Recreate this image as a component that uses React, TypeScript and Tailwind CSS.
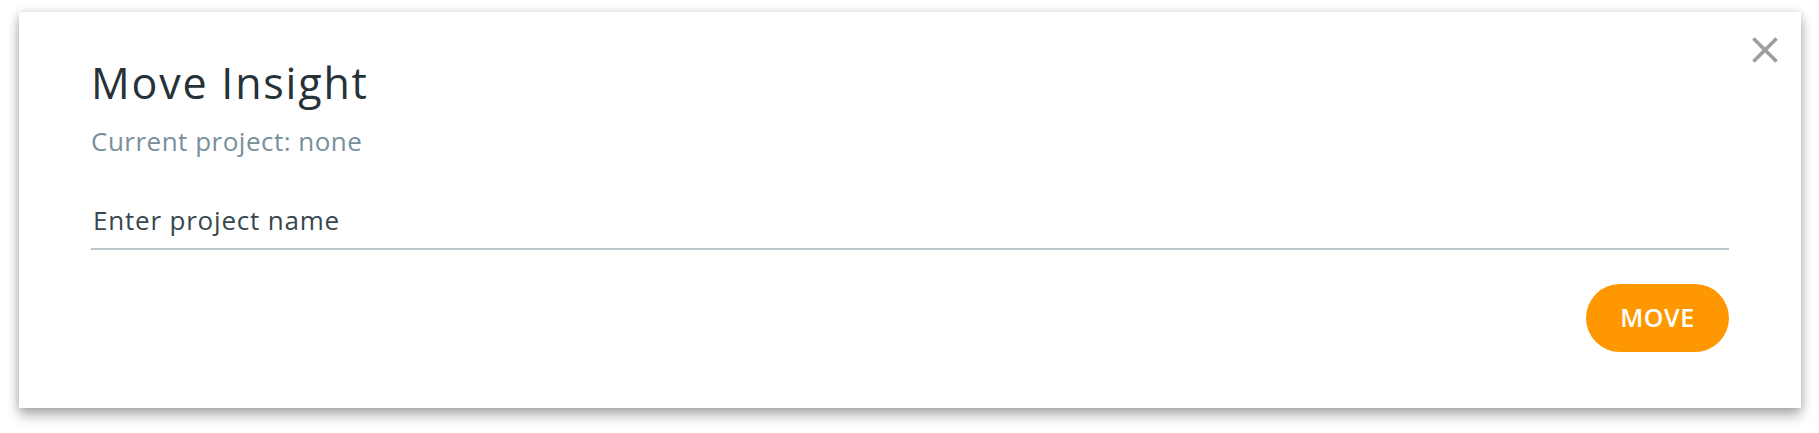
import React from 'react';

export default function App() {
  return (
    <div className="min-h-screen bg-white pl-[19px] pt-[12px]" style={{ fontFamily: '"Open Sans", "Noto Sans", sans-serif' }}>
      {/* Dialog card */}
      <div className="relative w-[1782px] h-[396px] bg-white shadow-[0_7px_12px_rgba(0,0,0,0.32),0_0_8px_rgba(0,0,0,0.12)] px-[72px] pt-[47px] flex flex-col">
        <button className="absolute right-[14px] top-[16px] text-[#9e9e9e]" aria-label="Close">
          <svg width="44" height="44" viewBox="0 0 24 24" fill="currentColor">
            <path d="M19 6.41L17.59 5 12 10.59 6.41 5 5 6.41 10.59 12 5 17.59 6.41 19 12 13.41 17.59 19 19 17.59 13.41 12z" />
          </svg>
        </button>

        <h2 className="text-[43px] leading-[48px] tracking-[1.8px] text-[#263238] font-normal">Move Insight</h2>
        <p className="mt-[18px] text-[26px] leading-[32px] tracking-[0.5px] text-[#78909c]">Current project: none</p>

        <input
          type="text"
          placeholder="Enter project name"
          className="mt-[41px] h-[52px] w-full pb-[6px] pl-[2px] border-b-2 border-[#bcc7cc] text-[26px] tracking-[0.8px] text-[#37474f] placeholder:text-[#37474f] outline-none bg-transparent"
        />

        <div className="mt-[34px] flex justify-end">
          <button className="h-[68px] w-[143px] rounded-full bg-[#ff9800] text-white text-[25px] font-semibold tracking-wide">
            MOVE
          </button>
        </div>
      </div>
    </div>
  );
}
